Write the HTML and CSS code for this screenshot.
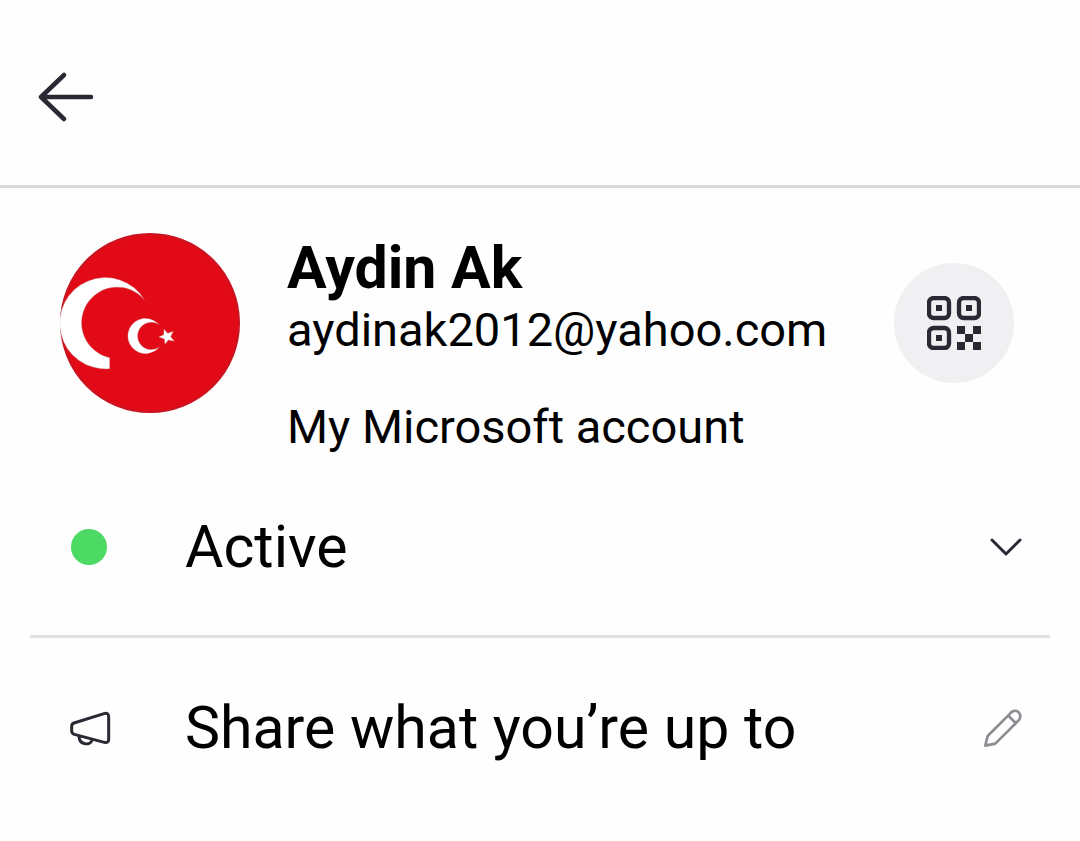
FILE: index.html
```html
<!DOCTYPE html>
<html lang="en">
<head>
<meta charset="utf-8">
<meta name="viewport" content="width=device-width, initial-scale=1">
<title>Profile</title>
<link rel="stylesheet" href="styles.css">
</head>
<body>
<header class="topbar">
  <button class="icon-button" type="button" aria-label="Back">
    <svg class="back-icon" viewBox="0 0 56 50" aria-hidden="true"><path d="M26 3 3 25 26 47M3 25H53"/></svg>
  </button>
</header>
<main>
  <section class="profile">
    <svg class="avatar" viewBox="30 30 540 540" role="img" aria-label="Profile picture">
      <circle class="avatar-disc" cx="300" cy="300" r="267"/>
      <g class="avatar-mark">
        <path d="M284 231A137 137 0 1 0 179 437V404A107 107 0 1 1 284 231Z"/>
        <path d="M327 305A53 53 0 1 0 328 372A41 41 0 1 1 327 305Z"/>
        <path d="M326 342 341 335 342 318 353 331 370 325 362 341 373 355 355 351 345 364 343 348Z"/>
      </g>
    </svg>
    <div class="details">
      <h1 class="name">Aydin Ak</h1>
      <p class="detail">aydinak2012@yahoo.com</p>
      <p class="detail account">My Microsoft account</p>
    </div>
    <button class="qr-button" type="button" aria-label="Show QR code">
      <svg class="qr-icon" viewBox="0 0 162 162" aria-hidden="true">
        <g class="qr-frame">
          <rect x="6" y="6" width="60" height="60" rx="14"/>
          <rect x="96" y="6" width="60" height="60" rx="14"/>
          <rect x="6" y="96" width="60" height="60" rx="14"/>
        </g>
        <path d="M27 27h18v18H27zM117 27h18v18h-18zM27 117h18v18H27zM90 90h24v24H90zM138 90h24v24h-24zM114 114h24v24h-24zM90 138h24v24H90zM138 138h24v24h-24z"/>
      </svg>
    </button>
  </section>
  <button class="row status" type="button">
    <span class="lead"><span class="dot"></span></span>
    <span class="label">Active</span>
    <svg class="chevron-icon" viewBox="0 0 32 18" aria-hidden="true"><path d="M2 2 16 16 30 2"/></svg>
  </button>
  <button class="row" type="button">
    <span class="lead">
      <svg class="megaphone-icon" viewBox="57 60 126 108" aria-hidden="true"><path d="M72 99 162 71Q176 67 176 80V148Q176 160 163 157L73 133Q65 130 65 123V109Q65 102 72 99ZM87 139C88 166 121 168 127 149"/></svg>
    </span>
    <span class="label">Share what you’re up to</span>
    <svg class="pencil-icon" viewBox="72 54 117 120" aria-hidden="true"><path d="M79 167 86 138 151 73C159 60 172 60 179 67S186 87 175 95L109 161ZM148 77 170 99"/></svg>
  </button>
</main>
</body>
</html>
```
FILE: styles.css
```css
* { box-sizing: border-box; }

body {
  margin: 0;
  background: #fefefe;
  color: #000;
  font-family: Roboto, "Liberation Sans", sans-serif;
}

button {
  padding: 0;
  border: 0;
  background: none;
  color: inherit;
  font: inherit;
  cursor: pointer;
}

svg {
  display: block;
  flex: none;
}

.topbar {
  display: flex;
  padding: 72px 38px 63px;
  border-bottom: 3px solid #d8dbdd;
}

.back-icon {
  width: 56px;
  height: 50px;
  fill: none;
  stroke: #292933;
  stroke-width: 4.5;
  stroke-linecap: round;
  stroke-linejoin: round;
}

.profile {
  display: flex;
  align-items: flex-start;
  gap: 47px;
  padding: 45px 66px 4px 60px;
}

.avatar {
  width: 180px;
  height: 180px;
}

.avatar-disc {
  fill: #e30a17;
  stroke: #c91421;
  stroke-width: 6;
}

.avatar-mark {
  fill: #fff;
  stroke: #b96a6a;
  stroke-width: 1;
}

.details {
  flex: 1;
  min-width: 0;
}

.name {
  margin: 0;
  font-size: 59px;
  font-weight: 700;
  line-height: 70px;
}

.detail {
  margin: 0;
  font-size: 47px;
  line-height: 54px;
}

.account { margin-top: 43px; }

.qr-button {
  display: grid;
  place-items: center;
  width: 120px;
  height: 120px;
  margin-top: 30px;
  border-radius: 50%;
  background: #f0f0f2;
}

.qr-icon {
  width: 54px;
  height: 54px;
  fill: #292933;
}

.qr-frame {
  fill: none;
  stroke: #292933;
  stroke-width: 13;
}

.row {
  display: flex;
  align-items: center;
  width: 100%;
  min-height: 180px;
  padding: 0 58px 0 69px;
  text-align: left;
}

.status {
  width: calc(100% - 60px);
  margin: 0 30px;
  padding: 0 28px 0 39px;
  border-bottom: 3px solid #e1e1e1;
}

.lead {
  flex: none;
  width: 116px;
}

.dot {
  display: block;
  width: 36px;
  height: 36px;
  margin-left: 2px;
  border-radius: 50%;
  background: #4cd964;
}

.label {
  flex: 1;
  font-size: 59px;
  line-height: 70px;
}

.chevron-icon {
  width: 32px;
  height: 18px;
  fill: none;
  stroke: #292933;
  stroke-width: 3;
  stroke-linecap: round;
  stroke-linejoin: round;
}

.megaphone-icon {
  width: 42px;
  height: 36px;
  fill: none;
  stroke: #292933;
  stroke-width: 9;
  stroke-linecap: round;
  stroke-linejoin: round;
}

.pencil-icon {
  width: 39px;
  height: 40px;
  fill: none;
  stroke: #8a8d91;
  stroke-width: 8;
  stroke-linecap: round;
  stroke-linejoin: round;
}
```
